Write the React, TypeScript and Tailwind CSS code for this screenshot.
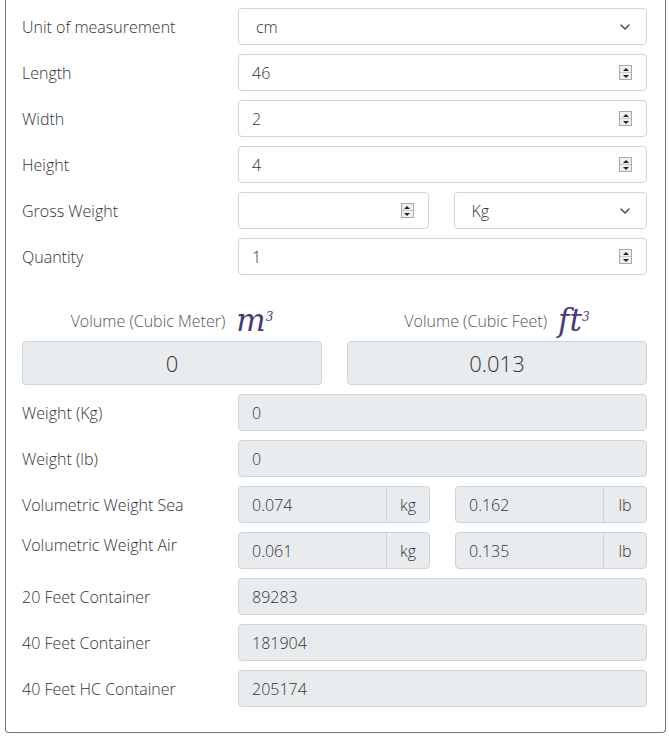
import { ChevronDown } from 'lucide-react';

const font = { fontFamily: '"Open Sans", "Noto Sans", sans-serif' };

function Spinner() {
  return (
    <div className="flex h-[15px] w-[13px] flex-col border border-[#a9a9a9] bg-[#f0f0f0]">
      <div className="flex flex-1 items-center justify-center border-b border-[#c8c8c8]">
        <div className="h-0 w-0 border-x-[3px] border-b-[3px] border-x-transparent border-b-[#222]" />
      </div>
      <div className="flex flex-1 items-center justify-center">
        <div className="h-0 w-0 border-x-[3px] border-t-[3px] border-x-transparent border-t-[#222]" />
      </div>
    </div>
  );
}

function NumberInput({ value = '' }: { value?: string }) {
  return (
    <div className="flex h-[37px] flex-1 items-center justify-between rounded-[4px] border border-[#ced4da] bg-white pl-[13px] pr-[14px] text-[16px] font-light text-[#333]">
      <span>{value}</span>
      <Spinner />
    </div>
  );
}

function SelectBox({ value }: { value: string }) {
  return (
    <div className="flex h-[37px] flex-1 items-center justify-between rounded-[4px] border border-[#ced4da] bg-white pl-[17px] pr-[13px] text-[16px] font-light text-[#333]">
      <span>{value}</span>
      <ChevronDown className="h-4 w-4 text-[#444]" strokeWidth={2} />
    </div>
  );
}

function ReadOnly({ value }: { value: string }) {
  return (
    <div className="flex h-[37px] flex-1 items-center rounded-[4px] border border-[#ced4da] bg-[#e9ecef] pl-[13px] text-[16px] font-light text-[#333]">
      {value}
    </div>
  );
}

function UnitGroup({ value, unit }: { value: string; unit: string }) {
  return (
    <div className="flex h-[37px] flex-1 overflow-hidden rounded-[4px] border border-[#ced4da] bg-[#e9ecef] text-[16px] font-light text-[#333]">
      <div className="flex flex-1 items-center pl-[13px]">{value}</div>
      <div className="flex w-[43px] items-center justify-center border-l border-[#ced4da]">{unit}</div>
    </div>
  );
}

function Row({ label, children, labelClass = 'items-center' }: { label: string; children: React.ReactNode; labelClass?: string }) {
  return (
    <div className="mb-[9px] flex">
      <div className={`flex w-[216px] shrink-0 text-[16px] font-light text-[#333] ${labelClass}`}>{label}</div>
      <div className="flex flex-1 gap-[25px]">{children}</div>
    </div>
  );
}

function VolumeBox({ label, unit, sup, value }: { label: string; unit: string; sup: string; value: string }) {
  return (
    <div className="flex flex-1 flex-col">
      <div className="flex h-[57px] items-end justify-center pb-[5px]">
        <span className="mb-[3px] text-[16px] font-light text-[#555]">{label}</span>
        <span
          className="ml-[11px] text-[31px] italic leading-none text-[#4a3a7a]"
          style={{ fontFamily: '"DejaVu Serif", serif' }}
        >
          {unit}
          <sup className="relative -top-[10px] text-[12px]">{sup}</sup>
        </span>
      </div>
      <div className="flex h-[44px] items-center justify-center rounded-[4px] border border-[#ced4da] bg-[#e9ecef] text-[22px] font-light text-[#333]">
        {value}
      </div>
    </div>
  );
}

export default function App() {
  return (
    <div className="h-[738px] w-[669px] bg-white" style={font}>
      <div className="ml-[5px] w-[661px] rounded-b-[4px] border-x border-b border-[#777] pb-[16px] pl-[16px] pr-[18px] pt-[8px]">
        <Row label="Unit of measurement">
          <SelectBox value="cm" />
        </Row>
        <Row label="Length">
          <NumberInput value="46" />
        </Row>
        <Row label="Width">
          <NumberInput value="2" />
        </Row>
        <Row label="Height">
          <NumberInput value="4" />
        </Row>
        <Row label="Gross Weight">
          <NumberInput />
          <SelectBox value="Kg" />
        </Row>
        <Row label="Quantity">
          <NumberInput value="1" />
        </Row>

        <div className="mb-[9px] flex gap-[25px]">
          <VolumeBox label="Volume (Cubic Meter)" unit="m" sup="3" value="0" />
          <VolumeBox label="Volume (Cubic Feet)" unit="ft" sup="3" value="0.013" />
        </div>

        <Row label="Weight (Kg)">
          <ReadOnly value="0" />
        </Row>
        <Row label="Weight (lb)">
          <ReadOnly value="0" />
        </Row>
        <Row label="Volumetric Weight Sea">
          <UnitGroup value="0.074" unit="kg" />
          <UnitGroup value="0.162" unit="lb" />
        </Row>
        <Row label="Volumetric Weight Air" labelClass="items-start pt-[1px]">
          <UnitGroup value="0.061" unit="kg" />
          <UnitGroup value="0.135" unit="lb" />
        </Row>
        <Row label="20 Feet Container">
          <ReadOnly value="89283" />
        </Row>
        <Row label="40 Feet Container">
          <ReadOnly value="181904" />
        </Row>
        <Row label="40 Feet HC Container">
          <ReadOnly value="205174" />
        </Row>
      </div>
    </div>
  );
}
